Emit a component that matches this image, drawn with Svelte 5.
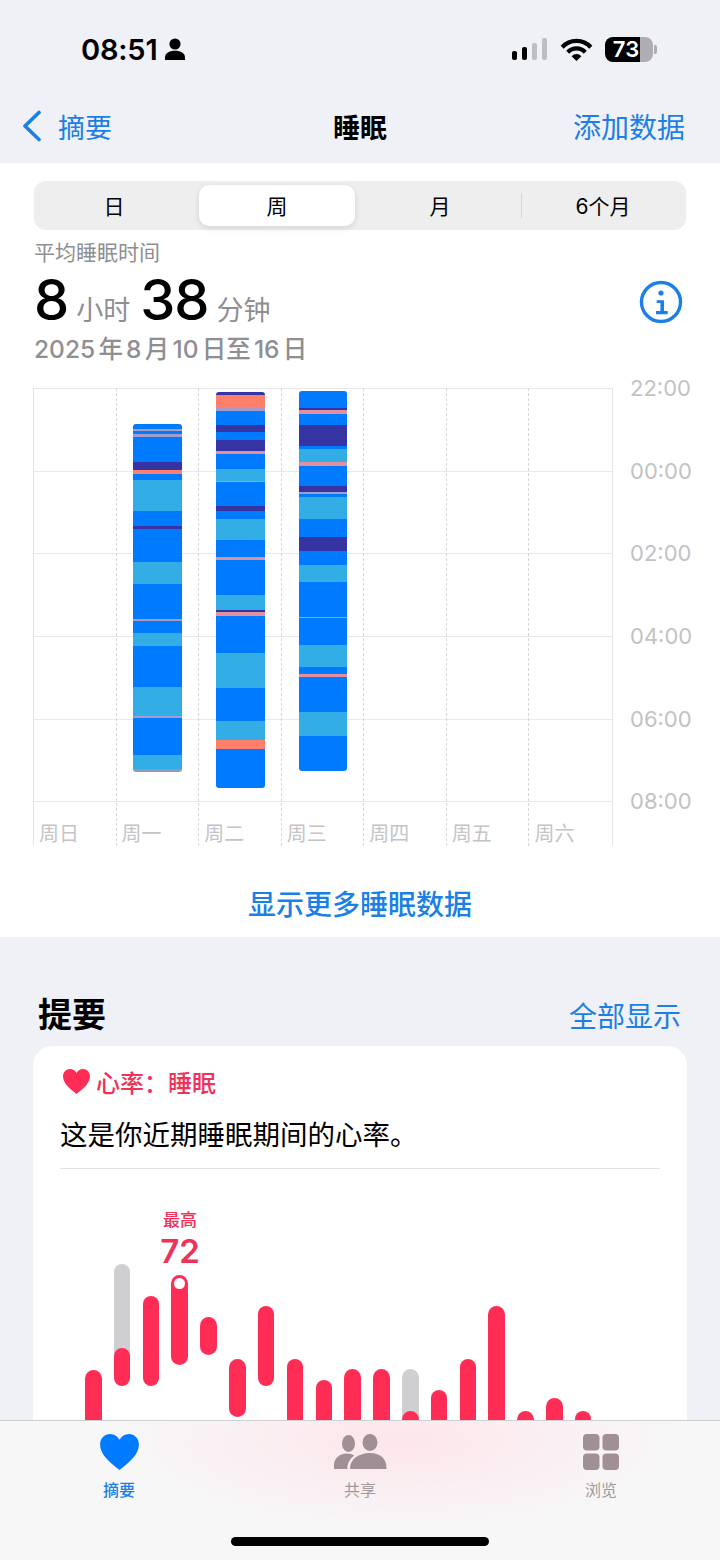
<script>
    const tabs = ['日', '周', '月', '6个月'];
    const hours = ['22:00', '00:00', '02:00', '04:00', '06:00', '08:00'];
    const days = ['周日', '周一', '周二', '周三', '周四', '周五', '周六'];

    // y of the chart top in page coordinates; segments below are [kind, end y]
    const chartTop = 388;
    const sleep = [
        { day: 1, top: 424, segs: [['b',429],['l',431],['b',434],['l',437],['b',462],['d',470],['c',474],['b',480],['s',511],['b',526],['d',529],['b',562],['s',584],['b',619],['l',620.5],['b',633],['s',646],['b',687],['s',716],['l',718],['b',755],['s',769],['g',772]] },
        { day: 2, top: 392, segs: [['d',395],['c',408],['l',411],['b',425],['d',432],['b',440],['d',451],['p',454],['b',469],['s',481],['l',482],['b',506],['d',511],['b',519],['s',540],['b',557],['p',560],['b',595],['s',610],['d',612],['p',616],['b',653],['s',688],['b',721],['s',740],['c',749],['b',788]] },
        { day: 3, top: 391, segs: [['b',408],['d',410],['p',414],['b',425],['d',446],['b',449],['s',462],['p',466],['b',486],['d',492],['l',494],['b',497],['s',519],['b',537],['d',551],['b',565],['s',582],['b',616.5],['l',617.5],['b',645],['s',667],['b',674],['p',677],['b',712],['s',736],['b',771]] }
    ];

    function segments(row) {
        let y = row.top;
        return row.segs.map(([kind, end]) => {
            const h = end - y;
            y = end;
            return { kind, h };
        });
    }

    // heart rate chart, page y values; anything that ends under the tab bar gets bottom 1500
    const rateTop = 1200;
    const rates = [
        { top: 1370, end: 1500 },
        { top: 1348, end: 1386, ghost: 1264 },
        { top: 1296, end: 1386 },
        { top: 1275, end: 1365, peak: true },
        { top: 1317, end: 1355 },
        { top: 1359, end: 1417 },
        { top: 1306, end: 1386 },
        { top: 1359, end: 1500 },
        { top: 1380, end: 1500 },
        { top: 1369, end: 1500 },
        { top: 1369, end: 1500 },
        { top: 1411, end: 1500, ghost: 1369 },
        { top: 1390, end: 1500 },
        { top: 1359, end: 1500 },
        { top: 1306, end: 1500 },
        { top: 1411, end: 1500 },
        { top: 1398, end: 1500 },
        { top: 1411, end: 1500 }
    ];
</script>

<div class="screen">
    <header class="top">
        <div class="status">
            <div class="status__left">
                <span class="clock">08:51</span>
                <svg class="person" viewBox="0 0 20 22" aria-hidden="true">
                    <circle cx="10" cy="6" r="5.6" />
                    <path d="M0 22v-2.4C0 15 4.2 12.8 10 12.8s10 2.2 10 6.8V22z" />
                </svg>
            </div>
            <div class="status__right">
                <div class="signal">
                    <i class="on" style="height:9px"></i>
                    <i class="on" style="height:13px"></i>
                    <i style="height:17px"></i>
                    <i style="height:22px"></i>
                </div>
                <svg class="wifi" viewBox="0 0 33 23" aria-hidden="true">
                    <path class="arc" d="M2.2 9.2A19.5 19.5 0 0 1 30.8 9.2" />
                    <path class="arc" d="M7.7 14.3A12 12 0 0 1 25.3 14.3" />
                    <path d="M16.5 23L11.6 18.2A6.6 6.6 0 0 1 21.4 18.2z" />
                </svg>
                <div class="battery">
                    <div class="battery__body"><span>73</span></div>
                    <div class="battery__nub"></div>
                </div>
            </div>
        </div>
        <nav class="nav">
            <div class="nav__back">
                <svg viewBox="0 0 20 32" aria-hidden="true"><path d="M17 2.5L3 16l14 13.5" /></svg>
                <span>摘要</span>
            </div>
            <div class="nav__title">睡眠</div>
            <div class="nav__action">添加数据</div>
        </nav>
    </header>

    <section class="sleep">
        <div class="segmented">
            {#each tabs as tab, i}
                <div class="segmented__item" class:active={i === 1}><span>{tab}</span></div>
            {/each}
            <div class="segmented__sep"></div>
        </div>

        <div class="summary">
            <div class="summary__text">
                <div class="summary__label">平均睡眠时间</div>
                <div class="summary__value">
                    <b>8</b><span>小时</span><b>38</b><span>分钟</span>
                </div>
                <div class="summary__date">2025 年 8 月 10 日至 16 日</div>
            </div>
            <svg class="info" viewBox="0 0 44 44" aria-hidden="true">
                <circle class="ring" cx="22" cy="22" r="19.5" />
                <circle cx="22" cy="13" r="2.6" />
                <path d="M17.7 20.3H25V31H28.7V34.3H17V31H21.4V23H17.7z" />
            </svg>
        </div>

        <div class="chart">
            <div class="plot">
                <div class="plot__rows">
                    {#each hours as h}
                        <div class="plot__row"></div>
                    {/each}
                </div>
                <div class="plot__cols">
                    {#each days as d}
                        <div class="plot__col"><span>{d}</span></div>
                    {/each}
                </div>
                {#each sleep as row}
                    <div class="bar" style="left:{row.day * 82.75 + 16.5}px;top:{row.top - chartTop}px">
                        {#each segments(row) as s}
                            <div class="seg seg--{s.kind}" style="height:{s.h}px"></div>
                        {/each}
                    </div>
                {/each}
            </div>
            <div class="axis">
                {#each hours as h}
                    <div class="axis__label">{h}</div>
                {/each}
            </div>
        </div>

        <div class="more">显示更多睡眠数据</div>
    </section>

    <section class="highlights">
        <div class="highlights__head">
            <h2>提要</h2>
            <span>全部显示</span>
        </div>
        <div class="card">
            <div class="card__tag">
                <svg viewBox="0 0 28 26" aria-hidden="true">
                    <path d="M14 26C5 19 0 14 0 7.6 0 3.2 3.2 0 7.2 0 10.2 0 12.6 1.6 14 4.2 15.4 1.6 17.8 0 20.8 0 24.8 0 28 3.2 28 7.6 28 14 23 19 14 26z" />
                </svg>
                <span>心率&#xFF1A;睡眠</span>
            </div>
            <div class="card__title">这是你近期睡眠期间的心率。</div>
            <div class="card__rule"></div>
            <div class="rate">
                <div class="rate__peak">
                    <small>最高</small>
                    <b>72</b>
                </div>
                {#each rates as r, i}
                    {#if r.ghost}
                        <div class="pill pill--ghost" style="left:{i * 28.82 + 25}px;top:{r.ghost - rateTop}px;height:{r.top - r.ghost + 20}px"></div>
                    {/if}
                    <div class="pill" style="left:{i * 28.82 + 25}px;top:{r.top - rateTop}px;height:{r.end - r.top}px">
                        {#if r.peak}<span class="pill__dot"></span>{/if}
                    </div>
                {/each}
            </div>
        </div>
    </section>

    <footer class="tabbar">
        <div class="tabbar__items">
            <div class="tab tab--on">
                <svg width="39" height="36" viewBox="0 0 28 26" aria-hidden="true">
                    <path d="M14 26C5 19 0 14 0 7.6 0 3.2 3.2 0 7.2 0 10.2 0 12.6 1.6 14 4.2 15.4 1.6 17.8 0 20.8 0 24.8 0 28 3.2 28 7.6 28 14 23 19 14 26z" />
                </svg>
                <span>摘要</span>
            </div>
            <div class="tab">
                <svg width="53" height="36" viewBox="0 0 53 36" aria-hidden="true">
                    <ellipse cx="14.5" cy="9.5" rx="6.5" ry="8.5" />
                    <ellipse cx="36" cy="8.5" rx="7.5" ry="8.5" />
                    <path d="M0 35v-4C0 24 6 19.5 13 19.5c3 0 5.4 .7 7.4 2-4.4 3-7 7.5-7 12.5v1z" />
                    <path d="M16.5 35c-.5 0-.5-.5-.5-1 0-8.5 9-15 20-15s16.5 6.5 16.5 15c0 .5 0 1-.5 1z" />
                </svg>
                <span>共享</span>
            </div>
            <div class="tab">
                <svg width="36" height="36" viewBox="0 0 36 36" aria-hidden="true">
                    <rect x="0" y="0" width="16.5" height="16.5" rx="4" />
                    <rect x="19.5" y="0" width="16.5" height="16.5" rx="4" />
                    <rect x="0" y="19.5" width="16.5" height="16.5" rx="4" />
                    <rect x="19.5" y="19.5" width="16.5" height="16.5" rx="4" />
                </svg>
                <span>浏览</span>
            </div>
        </div>
        <div class="home"></div>
    </footer>
</div>

<style>
    :global(body) {
        background: #f0f1f6;
    }

    .screen {
        position: relative;
        width: 720px;
        height: 1560px;
        overflow: hidden;
        background: #f0f1f6;
        color: #000;
        font-family: Inter, "Noto Sans CJK SC", sans-serif;
    }

    /* status + nav */
    .top {
        height: 163px;
    }

    .status {
        display: flex;
        justify-content: space-between;
        align-items: center;
        height: 98px;
        padding: 0 63px 0 81px;
    }

    .status__left {
        display: flex;
        align-items: center;
        gap: 8px;
    }

    .clock {
        font-size: 29px;
        font-weight: 600;
        letter-spacing: -0.2px;
    }

    .person {
        width: 20px;
        height: 22px;
        fill: #000;
    }

    .status__right {
        display: flex;
        align-items: center;
        gap: 12.5px;
    }

    .signal {
        display: flex;
        align-items: flex-end;
        gap: 4.5px;
        height: 22px;
    }

    .signal i {
        display: block;
        width: 5.5px;
        border-radius: 2px;
        background: #bdbdc2;
    }

    .signal i.on {
        background: #000;
    }

    .wifi {
        width: 33px;
        height: 23px;
        fill: #000;
    }

    .wifi .arc {
        fill: none;
        stroke: #000;
        stroke-width: 4.2;
    }

    .battery {
        display: flex;
        align-items: center;
        gap: 1px;
    }

    .battery__body {
        display: flex;
        align-items: center;
        justify-content: center;
        width: 48px;
        height: 25px;
        padding-right: 6px;
        box-sizing: border-box;
        border-radius: 8px;
        background: linear-gradient(90deg, #000 73%, #aeaeb2 73%);
        color: #fff;
        font-size: 22px;
        font-weight: 600;
    }

    .battery__nub {
        width: 3px;
        height: 9px;
        border-radius: 0 2px 2px 0;
        background: #aeaeb2;
    }

    .nav {
        display: grid;
        grid-template-columns: 1fr auto 1fr;
        align-items: center;
        height: 56px;
        padding: 0 35px;
    }

    .nav__back {
        display: flex;
        align-items: center;
        gap: 16px;
        margin-left: -13px;
        color: #1a7fe6;
        font-size: 27px;
    }

    .nav__back svg {
        width: 20px;
        height: 32px;
        fill: none;
        stroke: #1a7fe6;
        stroke-width: 3.6;
        stroke-linecap: round;
        stroke-linejoin: round;
    }

    .nav__title {
        font-size: 27px;
        font-weight: 700;
    }

    .nav__action {
        justify-self: end;
        color: #1a7fe6;
        font-size: 28px;
    }

    /* white sleep panel */
    .sleep {
        height: 774px;
        padding-top: 18px;
        box-sizing: border-box;
        background: #fff;
    }

    .segmented {
        position: relative;
        display: grid;
        grid-template-columns: repeat(4, 163px);
        width: 652px;
        height: 49px;
        margin-left: 34px;
        padding: 4px 0;
        box-sizing: border-box;
        border-radius: 12px;
        background: #eeeeef;
    }

    .segmented__item {
        display: flex;
        align-items: center;
        justify-content: center;
        margin: 0 5px 0 2px;
        padding-bottom: 2px;
        border-radius: 10px;
        font-size: 21px;
    }

    .segmented__item.active {
        background: #fff;
        box-shadow: 0 2px 6px rgba(0, 0, 0, 0.12);
    }

    .segmented__sep {
        position: absolute;
        left: 487px;
        top: 12px;
        width: 1px;
        height: 25px;
        background: #d5d5d8;
    }

    .summary {
        display: flex;
        justify-content: space-between;
        align-items: center;
        padding: 8px 37px 0 34px;
    }

    .summary__label {
        height: 30px;
        color: #8e8e93;
        font-size: 21px;
        line-height: 30px;
    }

    .summary__value {
        display: flex;
        align-items: baseline;
        height: 58px;
        margin-top: 3px;
        line-height: 58px;
    }

    .summary__value b {
        font-size: 56px;
        font-weight: 500;
        letter-spacing: -1px;
    }

    .summary__value span {
        margin: 0 10px 0 8px;
        color: #8e8e93;
        font-size: 27px;
    }

    .summary__date {
        margin-top: 2px;
        color: #8e8e93;
        font-size: 24.5px;
        font-weight: 500;
        line-height: 36px;
        word-spacing: -3.3px;
    }

    .info {
        width: 44px;
        height: 44px;
        margin-bottom: 2px;
        fill: #1a7fe6;
    }

    .info .ring {
        fill: none;
        stroke: #1a7fe6;
        stroke-width: 3.4;
    }

    /* sleep chart */
    .chart {
        display: flex;
        margin: 21px 0 0 33px;
    }

    .plot {
        position: relative;
        width: 580px;
        height: 458px;
        box-sizing: border-box;
        border-left: 1px solid #e4e4e6;
        border-right: 1px solid #e4e4e6;
    }

    .plot__rows {
        display: flex;
        flex-direction: column;
    }

    .plot__row {
        height: 82.7px;
        box-sizing: border-box;
        border-top: 1px solid #e9e9eb;
    }

    .plot__cols {
        position: absolute;
        inset: 0;
        display: grid;
        grid-template-columns: repeat(7, 1fr);
    }

    .plot__col {
        border-right: 1px dashed #d6d6d9;
        padding: 433px 0 0 5px;
        color: #c4c4c7;
        font-size: 20px;
        line-height: 26px;
        overflow: hidden;
    }

    .plot__col:last-child {
        border-right: none;
    }

    .bar {
        position: absolute;
        display: flex;
        flex-direction: column;
        width: 48.5px;
        overflow: hidden;
        border-radius: 3px;
    }

    .seg--b { background: #007aff; }
    .seg--s { background: #32ade6; }
    .seg--d { background: #3634a3; }
    .seg--c { background: #ff7f6b; }
    .seg--p { background: #e0909f; }
    .seg--l { background: #a59cc9; }
    .seg--g { background: #8e9cb8; }

    .axis {
        display: flex;
        flex-direction: column;
        padding: 0 0 0 17px;
        margin-top: -14px;
    }

    .axis__label {
        height: 82.7px;
        color: #c2c2c5;
        font-size: 22px;
        line-height: 28px;
    }

    .more {
        margin-top: 16px;
        color: #1a7fe6;
        font-size: 28px;
        font-weight: 500;
        line-height: 38px;
        text-align: center;
    }

    /* highlights */
    .highlights {
        padding: 46px 33px 0;
    }

    .highlights__head {
        display: flex;
        justify-content: space-between;
        align-items: center;
        height: 63px;
        padding: 0 6px 0 5px;
    }

    .highlights__head h2 {
        margin: 0 0 4px;
        font-size: 34px;
        font-weight: 700;
    }

    .highlights__head span {
        color: #1a7fe6;
        font-size: 28px;
    }

    .card {
        height: 520px;
        padding: 19px 27px 0;
        box-sizing: border-box;
        border-radius: 20px;
        background: #fff;
    }

    .card__tag {
        display: flex;
        align-items: center;
        gap: 6px;
        height: 32px;
        padding-left: 3px;
        color: #f0325a;
        font-size: 24px;
        font-weight: 500;
    }

    .card__tag svg {
        width: 27px;
        height: 25px;
        fill: #ff2d55;
    }

    .card__title {
        margin-top: 20px;
        font-size: 27.5px;
        line-height: 36px;
    }

    .card__rule {
        height: 1px;
        margin-top: 15px;
        background: #e2e2e4;
    }

    .rate {
        position: relative;
        height: 320px;
        margin-top: 31px;
    }

    .rate__peak {
        position: absolute;
        left: 87px;
        top: 9px;
        display: flex;
        flex-direction: column;
        align-items: center;
        width: 66px;
        color: #f0325a;
    }

    .rate__peak small {
        font-size: 17px;
        font-weight: 500;
        line-height: 22px;
    }

    .rate__peak b {
        font-size: 33px;
        font-weight: 600;
        line-height: 40px;
    }

    .pill {
        position: absolute;
        width: 16.5px;
        border-radius: 8.5px;
        background: #ff2d55;
    }

    .pill--ghost {
        background: #cfcfd3;
    }

    .pill__dot {
        position: absolute;
        left: 3px;
        top: 3px;
        width: 10.5px;
        height: 10.5px;
        border-radius: 50%;
        background: #fff;
    }

    /* tab bar */
    .tabbar {
        position: absolute;
        left: 0;
        right: 0;
        bottom: 0;
        height: 140px;
        box-sizing: border-box;
        border-top: 1px solid #cfcfd2;
        background:
            radial-gradient(ellipse 280px 90px at 400px 20px, rgba(255, 225, 232, 0.8), rgba(255, 225, 232, 0)),
            #f7f7f8;
    }

    .tabbar__items {
        display: grid;
        grid-template-columns: 238px 1fr 238px;
        padding-top: 13px;
    }

    .tab {
        display: flex;
        flex-direction: column;
        align-items: center;
        gap: 10px;
        color: #a09a9c;
        font-size: 16px;
        line-height: 20px;
        fill: #a09095;
    }

    .tab--on {
        color: #1a7fe6;
        font-weight: 500;
        fill: #007aff;
    }

    .home {
        position: absolute;
        left: 231px;
        top: 116px;
        width: 258px;
        height: 9px;
        border-radius: 5px;
        background: #000;
    }
</style>
